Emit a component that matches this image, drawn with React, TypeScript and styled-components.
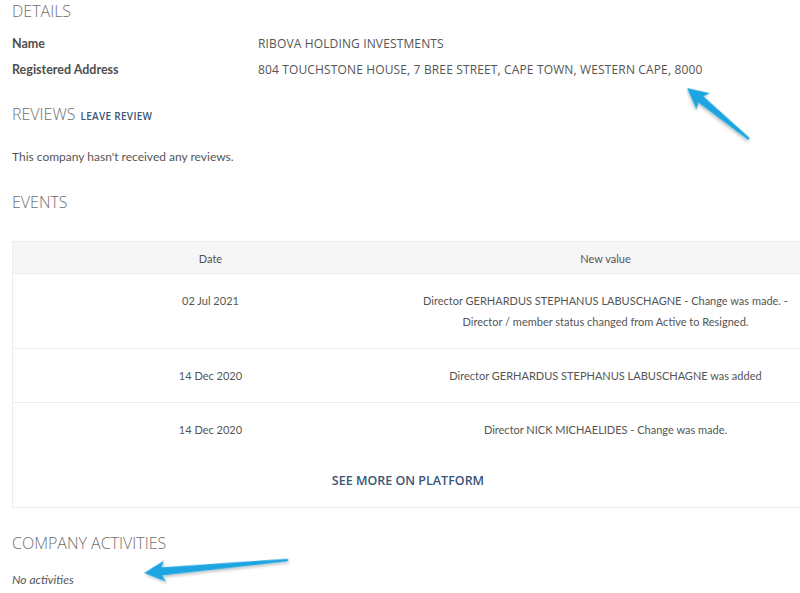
import * as React from 'react'
import styled, { createGlobalStyle } from 'styled-components'

const GlobalStyle = createGlobalStyle`
  html, body {
    margin: 0;
    padding: 0;
    background: #ffffff;
    overflow: hidden;
  }
  body {
    font-family: Lato, 'Open Sans', sans-serif;
    color: #555555;
  }
`

const Page = styled.div`
  position: relative;
  width: 800px;
  height: 593px;
  overflow: hidden;
  padding-left: 12px;
  box-sizing: border-box;
`

const SectionTitle = styled.h2<{ $top?: number }>`
  margin: ${({ $top }) => $top ?? 0}px 0 0;
  font-family: 'Open Sans', sans-serif;
  font-weight: 300;
  font-size: 16px;
  line-height: 22px;
  color: #6f6f6f;
  display: flex;
  align-items: baseline;
  gap: 5px;
`

const TitleLink = styled.span`
  font-family: 'Open Sans', sans-serif;
  font-weight: 600;
  font-size: 10px;
  color: #3b5677;
  letter-spacing: 0.3px;
`

const DetailsGrid = styled.dl`
  display: grid;
  grid-template-columns: 246px 1fr;
  row-gap: 10px;
  margin: 14px 0 0;
  font-size: 12px;
  line-height: 16px;
`

const DetailLabel = styled.dt`
  font-weight: 700;
  font-size: 12.5px;
  color: #4f4f4f;
`

const DetailValue = styled.dd`
  margin: 0;
  font-family: 'Open Sans', sans-serif;
  font-size: 12px;
  letter-spacing: 0.14px;
  color: #555555;
`

const Paragraph = styled.p<{ $italic?: boolean; $top: number }>`
  margin: ${({ $top }) => $top}px 0 0;
  font-size: 12px;
  line-height: 16px;
  font-style: ${({ $italic }) => ($italic ? 'italic' : 'normal')};
  color: #555555;
`

const Table = styled.div`
  margin-top: 28px;
  width: 790px;
  border: 1px solid #ececec;
  font-size: 11px;
  color: #555555;
`

const Row = styled.div<{ $head?: boolean; $last?: boolean }>`
  display: grid;
  grid-template-columns: 395px 1fr;
  background: ${({ $head }) => ($head ? '#f6f6f6' : '#ffffff')};
  border-bottom: ${({ $last }) => ($last ? 'none' : '1px solid #ededed')};
`

const Cell = styled.div<{ $head?: boolean }>`
  text-align: center;
  line-height: 21px;
  padding: ${({ $head }) => ($head ? '6px 10px 4px' : '16px 12px 16px')};
`

const MoreRow = styled.div`
  display: flex;
  justify-content: center;
  padding: 16px 0 17px;
`

const MoreLink = styled.a`
  font-family: 'Open Sans', sans-serif;
  font-weight: 600;
  font-size: 12.5px;
  line-height: 18px;
  color: #3b5677;
  text-decoration: none;
`

const Overlay = styled.svg`
  position: absolute;
  left: 0;
  top: 0;
  pointer-events: none;
`

interface ArrowProps {
  tip: [number, number]
  tail: [number, number]
}

const Arrow: React.FunctionComponent<ArrowProps> = ({ tip, tail }) => {
  const dx = tail[0] - tip[0]
  const dy = tail[1] - tip[1]
  const length = Math.sqrt(dx * dx + dy * dy)
  const angle = (Math.atan2(dy, dx) * 180) / Math.PI
  const points = [
    [0, 0],
    [21, -10.5],
    [18, -4],
    [length, -1.2],
    [length, 1.2],
    [18, 4],
    [21, 10.5],
  ]
    .map(([x, y]) => `${x},${y}`)
    .join(' ')

  return (
    <g transform={`translate(${tip[0]} ${tip[1]}) rotate(${angle})`} filter="url(#arrow-shadow)">
      <polygon points={points} fill="#1aa5e0" strokeLinejoin="round" />
    </g>
  )
}

const EVENTS = [
  {
    date: '02 Jul 2021',
    value: (
      <>
        Director GERHARDUS STEPHANUS LABUSCHAGNE - Change was made. -<br />
        Director / member status changed from Active to Resigned.
      </>
    ),
  },
  { date: '14 Dec 2020', value: 'Director GERHARDUS STEPHANUS LABUSCHAGNE was added' },
  { date: '14 Dec 2020', value: 'Director NICK MICHAELIDES - Change was made.' },
]

const App: React.FunctionComponent = () => (
  <Page>
    <GlobalStyle />
    <SectionTitle>DETAILS</SectionTitle>
    <DetailsGrid>
      <DetailLabel>Name</DetailLabel>
      <DetailValue>RIBOVA HOLDING INVESTMENTS</DetailValue>
      <DetailLabel>Registered Address</DetailLabel>
      <DetailValue>804 TOUCHSTONE HOUSE, 7 BREE STREET, CAPE TOWN, WESTERN CAPE, 8000</DetailValue>
    </DetailsGrid>

    <SectionTitle $top={25}>
      REVIEWS <TitleLink>LEAVE REVIEW</TitleLink>
    </SectionTitle>
    <Paragraph $top={22}>This company hasn't received any reviews.</Paragraph>

    <SectionTitle $top={26}>EVENTS</SectionTitle>
    <Table>
      <Row $head>
        <Cell $head>Date</Cell>
        <Cell $head>New value</Cell>
      </Row>
      {EVENTS.map((event, index) => (
        <Row key={index} $last={index === EVENTS.length - 1}>
          <Cell>{event.date}</Cell>
          <Cell>{event.value}</Cell>
        </Row>
      ))}
      <MoreRow>
        <MoreLink href="#">SEE MORE ON PLATFORM</MoreLink>
      </MoreRow>
    </Table>

    <SectionTitle $top={24}>COMPANY ACTIVITIES</SectionTitle>
    <Paragraph $italic $top={18}>
      No activities
    </Paragraph>

    <Overlay width={800} height={593}>
      <defs>
        <filter id="arrow-shadow" x="-20%" y="-50%" width="140%" height="200%">
          <feGaussianBlur in="SourceAlpha" stdDeviation="1.5" />
          <feOffset dx="1" dy="1.5" result="blur" />
          <feComponentTransfer>
            <feFuncA type="linear" slope="0.25" />
          </feComponentTransfer>
          <feMerge>
            <feMergeNode />
            <feMergeNode in="SourceGraphic" />
          </feMerge>
        </filter>
      </defs>
      <Arrow tip={[687, 88]} tail={[749, 139]} />
      <Arrow tip={[144, 573]} tail={[288, 560]} />
    </Overlay>
  </Page>
)

export default App
